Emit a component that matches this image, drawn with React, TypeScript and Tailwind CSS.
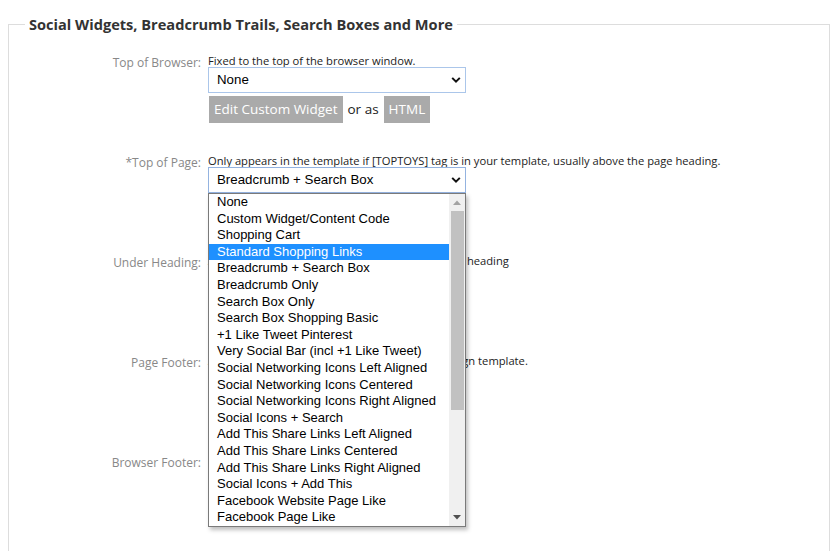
import React from "react";

const items = [
  "None",
  "Custom Widget/Content Code",
  "Shopping Cart",
  "Standard Shopping Links",
  "Breadcrumb + Search Box",
  "Breadcrumb Only",
  "Search Box Only",
  "Search Box Shopping Basic",
  "+1 Like Tweet Pinterest",
  "Very Social Bar (incl +1 Like Tweet)",
  "Social Networking Icons Left Aligned",
  "Social Networking Icons Centered",
  "Social Networking Icons Right Aligned",
  "Social Icons + Search",
  "Add This Share Links Left Aligned",
  "Add This Share Links Centered",
  "Add This Share Links Right Aligned",
  "Social Icons + Add This",
  "Facebook Website Page Like",
  "Facebook Page Like",
];

function Chevron() {
  return (
    <svg width="10" height="7" viewBox="0 0 10 7" className="absolute right-[4px] top-1/2 -translate-y-1/2">
      <path d="M1.2 1.4 L5 5.2 L8.8 1.4" fill="none" stroke="#111" strokeWidth="2" />
    </svg>
  );
}

function FakeSelect({ value, focused }: { value: string; focused?: boolean }) {
  return (
    <div
      className={`relative w-[258px] h-[26px] border bg-white flex items-center pl-[8px] font-['Liberation_Sans',Arial,sans-serif] text-[13.3px] text-black ${
        focused ? "border-[#94b3e0]" : "border-[#abc6ea]"
      }`}
    >
      {value}
      <Chevron />
    </div>
  );
}

function Buttons({ covered }: { covered?: boolean }) {
  return (
    <div
      className={`mt-[3px] flex items-center gap-[5px] font-['Open_Sans',sans-serif] text-[13.5px] ${
        covered ? "invisible" : ""
      }`}
    >
      <div className="h-[27px] ml-[1px] px-[5px] bg-[#aaaaaa] text-white flex items-center">Edit Custom Widget</div>
      <span className="text-[#222]">or as</span>
      <div className="h-[27px] px-[5px] bg-[#aaaaaa] text-white flex items-center">HTML</div>
    </div>
  );
}

function DropList() {
  return (
    <div className="absolute left-0 top-full z-10 w-[258px] h-[334px] border border-[#7a7a7a] bg-white shadow-[2px_3px_4px_rgba(0,0,0,0.25)] flex overflow-hidden">
      <div className="flex-1 flex flex-col font-['Liberation_Sans',Arial,sans-serif] text-[13px]">
        {items.map((it) => {
          const sel = it === "Standard Shopping Links";
          return (
            <div
              key={it}
              className={`h-[16.6px] shrink-0 leading-[16.6px] pl-[8px] whitespace-nowrap ${
                sel ? "bg-[#1e90ff] text-white" : "text-black"
              }`}
            >
              {it}
            </div>
          );
        })}
      </div>
      <div className="w-[16px] h-full bg-[#f0f0f0] flex flex-col items-center">
        <div className="h-[17px] flex items-center justify-center">
          <svg width="8" height="5" viewBox="0 0 8 5">
            <path d="M0 5 L4 0.5 L8 5 Z" fill="#a3a3a3" />
          </svg>
        </div>
        <div className="w-[13px] h-[199px] bg-[#c1c1c1]" />
        <div className="flex-1" />
        <div className="h-[17px] flex items-center justify-center">
          <svg width="8" height="5" viewBox="0 0 8 5">
            <path d="M0 0 L8 0 L4 4.5 Z" fill="#505050" />
          </svg>
        </div>
      </div>
    </div>
  );
}

function Row({
  label,
  desc,
  value,
  focused,
  open,
  covered,
  buttonsCovered,
}: {
  label: string;
  desc: string;
  value: string;
  focused?: boolean;
  open?: boolean;
  covered?: boolean;
  buttonsCovered?: boolean;
}) {
  return (
    <div className="flex">
      <div className="w-[193px] shrink-0 pr-[1px] text-right pt-[2px] font-['Open_Sans',sans-serif] text-[12px] leading-[13px] text-[#888]">
        {label}
      </div>
      <div className="ml-[6px] flex flex-col">
        <div className="font-['Open_Sans',sans-serif] text-[11.2px] leading-[13px] text-[#222] whitespace-nowrap">{desc}</div>
        <div className={`relative ${covered ? "[&>div:first-child]:invisible" : ""}`}>
          <FakeSelect value={value} focused={focused} />
          {open && <DropList />}
        </div>
        <Buttons covered={covered || buttonsCovered} />
      </div>
    </div>
  );
}

export default function App() {
  return (
    <div className="w-[838px] h-[551px] overflow-hidden bg-white">
      <fieldset className="mx-[8px] mt-[13px] border border-[#dddddd] h-[600px] pl-0 pt-[19px]">
        <legend className="ml-[16px] px-[4px] font-['Open_Sans',sans-serif] font-bold text-[14.6px] leading-[22px] text-[#333]">
          Social Widgets, Breadcrumb Trails, Search Boxes and More
        </legend>
        <div className="flex flex-col gap-[31px]">
          <Row label="Top of Browser:" desc="Fixed to the top of the browser window." value="None" />
          <Row
            label="*Top of Page:"
            desc="Only appears in the template if [TOPTOYS] tag is in your template, usually above the page heading."
            value="Breadcrumb + Search Box"
            focused
            open
            buttonsCovered
          />
          <Row
            label="Under Heading:"
            desc="Appears in your template directly under the page heading"
            value="None"
            covered
          />
          <Row
            label="Page Footer:"
            desc="Appears at the bottom of every page in your design template."
            value="None"
            covered
          />
          <Row label="Browser Footer:" desc="Fixed to the bottom of the browser." value="None" covered />
        </div>
      </fieldset>
    </div>
  );
}
